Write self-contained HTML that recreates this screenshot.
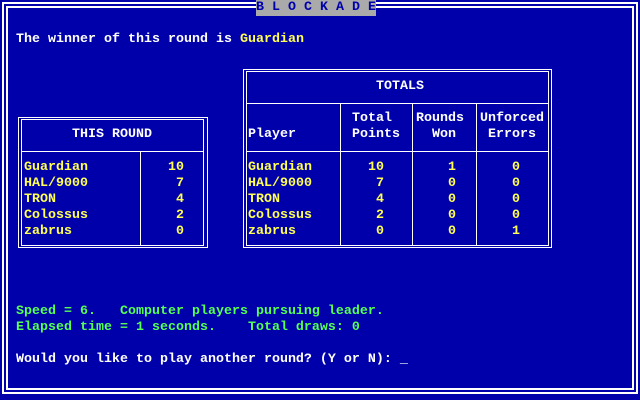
<!DOCTYPE html>
<html><head><style>
html,body{margin:0;padding:0}
body{width:640px;height:400px;background:#0000aa;position:relative;overflow:hidden;font-family:"Liberation Mono",monospace;font-weight:bold;font-size:13.33px;line-height:16px}
.t{position:absolute;white-space:pre;height:16px}
.w{color:#fff}.y{color:#ffff55}.g{color:#55ff55}
.l{position:absolute;background:#fff}
.b{position:absolute;border:1px solid #fff;box-sizing:border-box}
</style></head><body>
<!-- screen border -->
<div class="b" style="left:2px;top:2px;width:636px;height:392px;border-width:2px"></div>
<div class="b" style="left:6px;top:6px;width:628px;height:384px;border-width:2px"></div>
<div class="t" style="left:256px;top:0;width:120px;background:#aaaaaa;color:#0000aa">B L O C K A D E</div>

<div class="t w" style="left:16px;top:32px">The winner of this round is <span class="y">Guardian</span></div>

<!-- this round -->
<div class="b" style="left:18px;top:117px;width:190px;height:131px"></div>
<div class="b" style="left:21px;top:119px;width:183px;height:127px"></div>
<div class="l" style="left:21px;top:151px;width:183px;height:1px"></div>
<div class="l" style="left:140px;top:151px;width:1px;height:95px"></div>
<div class="t w" style="left:72px;top:127px">THIS ROUND</div>
<div class="t y" style="left:24px;top:160px">Guardian<br>HAL/9000<br>TRON<br>Colossus<br>zabrus</div>
<div class="t y" style="left:168px;top:160px;text-align:right;width:16px">10<br> 7<br> 4<br> 2<br> 0</div>

<!-- totals -->
<div class="b" style="left:243px;top:69px;width:309px;height:179px"></div>
<div class="b" style="left:246px;top:71px;width:303px;height:175px"></div>
<div class="l" style="left:246px;top:103px;width:303px;height:1px"></div>
<div class="l" style="left:246px;top:151px;width:303px;height:1px"></div>
<div class="l" style="left:340px;top:103px;width:1px;height:143px"></div>
<div class="l" style="left:412px;top:103px;width:1px;height:143px"></div>
<div class="l" style="left:476px;top:103px;width:1px;height:143px"></div>
<div class="t w" style="left:376px;top:79px">TOTALS</div>
<div class="t w" style="left:248px;top:127px">Player</div>
<div class="t w" style="left:352px;top:111px">Total<br>Points</div>
<div class="t w" style="left:416px;top:111px">Rounds<br>  Won</div>
<div class="t w" style="left:480px;top:111px">Unforced<br> Errors</div>
<div class="t y" style="left:248px;top:160px">Guardian<br>HAL/9000<br>TRON<br>Colossus<br>zabrus</div>
<div class="t y" style="left:368px;top:160px">10<br> 7<br> 4<br> 2<br> 0</div>
<div class="t y" style="left:448px;top:160px">1<br>0<br>0<br>0<br>0</div>
<div class="t y" style="left:512px;top:160px">0<br>0<br>0<br>0<br>1</div>

<div class="t g" style="left:16px;top:304px">Speed = 6.   Computer players pursuing leader.</div>
<div class="t g" style="left:16px;top:320px">Elapsed time = 1 seconds.    Total draws: 0</div>
<div class="t w" style="left:16px;top:352px">Would you like to play another round? (Y or N): _</div>
</body></html>
